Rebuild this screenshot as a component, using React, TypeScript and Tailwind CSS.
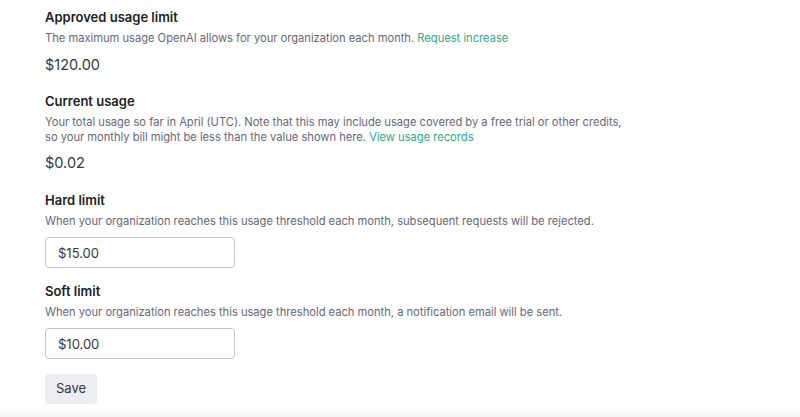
import React from 'react';

const font = { fontFamily: 'Inter, "Noto Sans", sans-serif' };

function Heading({ children }: { children: React.ReactNode }) {
  return <h2 className="text-[13px] leading-5 font-semibold text-[#202123]">{children}</h2>;
}

function Desc({ children, className = '' }: { children: React.ReactNode; className?: string }) {
  return <p className={`text-[11.15px] leading-4 text-[#66667a] ${className}`}>{children}</p>;
}

function MoneyInput({ value }: { value: string }) {
  return (
    <input
      defaultValue={value}
      className="mt-2 block h-[31px] w-[190px] rounded-[4px] border border-[#c5c5d2] bg-white px-3 text-[13px] text-[#353740] outline-none"
      style={font}
    />
  );
}

export default function App() {
  return (
    <div className="relative h-[417px] w-[800px] overflow-hidden bg-white" style={font}>
      <div className="pl-[45px] pt-[7px]">
        {/* Approved usage limit */}
        <section>
          <Heading>Approved usage limit</Heading>
          <Desc className="mt-[3px]">
            The maximum usage OpenAI allows for your organization each month.{' '}
            <a className="text-[#34a985]" href="#">Request increase</a>
          </Desc>
          <div className="mt-[7px] text-[14.5px] leading-6 text-[#353740]">$120.00</div>
        </section>

        {/* Current usage */}
        <section className="mt-[14px]">
          <Heading>Current usage</Heading>
          <Desc className="mt-[4px] !leading-[15px]">
            Your total usage so far in April (UTC). Note that this may include usage covered by a free trial or other credits,
            <br />
            so your monthly bill might be less than the value shown here.{' '}
            <a className="text-[#34a985]" href="#">View usage records</a>
          </Desc>
          <div className="mt-[6px] text-[14.5px] leading-6 text-[#353740]">$0.02</div>
        </section>

        {/* Hard limit */}
        <section className="mt-[15px]">
          <Heading>Hard limit</Heading>
          <Desc className="mt-[3px]">
            When your organization reaches this usage threshold each month, subsequent requests will be rejected.
          </Desc>
          <MoneyInput value="$15.00" />
        </section>

        {/* Soft limit */}
        <section className="mt-[13px]">
          <Heading>Soft limit</Heading>
          <Desc className="mt-[3px]">
            When your organization reaches this usage threshold each month, a notification email will be sent.
          </Desc>
          <MoneyInput value="$10.00" />
        </section>

        <button className="mt-[15px] h-[30px] rounded-[4px] bg-[#ececf1] px-[11px] text-[13px] text-[#353740]">
          Save
        </button>
      </div>
      <div className="absolute bottom-0 left-0 h-[10px] w-full bg-gradient-to-b from-white to-[#f3f3f5]" />
    </div>
  );
}
